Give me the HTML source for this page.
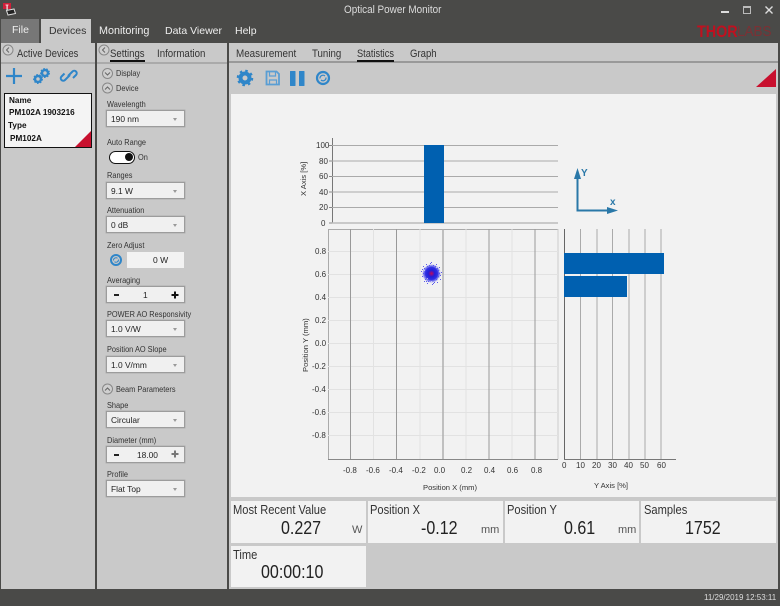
<!DOCTYPE html>
<html><head><meta charset="utf-8"><style>
html,body{margin:0;padding:0;width:780px;height:606px;overflow:hidden;background:#4a4a48}
body{position:relative;font-family:"Liberation Sans",sans-serif;color:#222}
.a,.t{position:absolute}
.t{white-space:nowrap;line-height:1;transform-origin:0 0}
.cb{position:absolute;left:106px;width:77px;height:15px;background:#f0f0f0;border:1px solid #9c9c9c;box-shadow:0 0 0 .5px #b0b0b0}
.cb span{position:absolute;left:4px;top:3px;font-size:8.400px;line-height:10px;color:#222;white-space:nowrap}
.cb i{position:absolute;right:7px;top:7px;width:0;height:0;border-left:2.5px solid transparent;border-right:2.5px solid transparent;border-top:3px solid #999}
.l{font-size:8.600px;color:#333;left:107px;transform:scaleX(.86)}
.c{position:absolute;background:#f2f2f2}
.c b{position:absolute;left:2px;top:2px;font-weight:400;font-size:12.5px;color:#333;line-height:14px;white-space:nowrap;transform:scaleX(.89);transform-origin:0 0}
.c u{position:absolute;text-decoration:none;font-size:18px;line-height:20px;color:#222;white-space:nowrap;transform:scaleX(.89);transform-origin:0 0}
.c s{position:absolute;text-decoration:none;font-size:11px;line-height:12px;color:#555;white-space:nowrap}
.m{font-size:10.500px;color:#eee}
.tab{font-size:11px;color:#333;transform:scaleX(.87)}
.tk{font-size:8px;color:#333;margin-top:.5px}
.ax{font-size:7.600px;color:#333}
.n{font-size:8.200px;font-weight:700;color:#111}
</style></head><body>

<!-- title bar text -->
<div class="t" style="left:344px;top:5px;font-size:11px;color:#ddd;transform:scaleX(.9)">Optical Power Monitor</div>
<svg class="a" style="left:0;top:0" width="24" height="18"><rect x="3" y="3" width="8" height="6" fill="#d0203a"/><rect x="5.500" y="4.500" width="3" height="1" fill="#f4c0c8"/><rect x="6.500" y="5" width="1.200" height="6" fill="#eee"/><path d="M6.500 10.500l7.500-1.500 1.500 4.500-7.500 1.500z" fill="#222" stroke="#ddd"/></svg>
<div class="a" style="left:721px;top:11px;width:8px;height:2px;background:#ddd"></div>
<div class="a" style="left:743px;top:6px;width:6px;height:5px;border:1px solid #bbb;border-top-width:2px"></div>
<svg class="a" style="left:764px;top:5px" width="11" height="11"><path d="M1.500 1.500l7 7M8.500 1.500l-7 7" stroke="#ddd" stroke-width="1.400" fill="none"/></svg>
<div class="t" style="left:697px;top:24px;font-size:16.500px;font-weight:700;color:#c0101f;transform:scaleX(.87)">THOR</div>
<div class="t" style="left:737px;top:25px;font-size:14.500px;color:#7d3034;transform:scaleX(.93)">LABS</div>

<!-- menu -->
<div class="a" style="left:1px;top:19px;width:38px;height:24px;background:#777"></div>
<div class="a" style="left:41px;top:19px;width:50px;height:24px;background:#c9c9c9"></div>
<div class="t m" style="left:12px;top:25px;color:#eee">File</div>
<div class="t m" style="left:49px;top:26px;color:#333">Devices</div>
<div class="t m" style="left:99px;top:26px;font-size:10.800px">Monitoring</div>
<div class="t m" style="left:165px;top:26px">Data Viewer</div>
<div class="t m" style="left:235px;top:26px">Help</div>

<!-- panels -->
<div class="a" style="left:1px;top:43px;width:94px;height:546px;background:#c9c9c9"></div>
<div class="a" style="left:97px;top:43px;width:130px;height:546px;background:#c9c9c9"></div>
<div class="a" style="left:229px;top:43px;width:549px;height:546px;background:#c9c9c9"></div>
<div class="a" style="left:1px;top:62px;width:94px;height:2px;background:#aaa"></div>
<div class="a" style="left:97px;top:62px;width:130px;height:2px;background:#aaa"></div>
<div class="a" style="left:229px;top:61px;width:549px;height:2px;background:#999"></div>

<!-- panel 1 -->
<svg class="a" style="left:0;top:42px" width="230" height="60" fill="none">
<circle cx="8" cy="8" r="5" stroke="#888" fill="#cfcfcf"/><path d="M9 5.500L6.500 8 9 10.500" stroke="#666"/>
<circle cx="104" cy="8" r="5" stroke="#888" fill="#cfcfcf"/><path d="M105 5.500L102.500 8 105 10.500" stroke="#666"/>
</svg>
<div class="t tab" style="left:17px;top:49px;transform:scaleX(.85)">Active Devices</div>
<svg class="a" style="left:0;top:64px" width="90" height="24" fill="none">
<path d="M6 12h16M14 4v16" stroke="#2f86c9" stroke-width="2.200"/>
<circle cx="38" cy="15" r="3" stroke="#2f86c9" stroke-width="2.500"/><circle cx="38" cy="15" r="4.200" stroke="#2f86c9" stroke-width="1.500" stroke-dasharray="1.500 1.500"/>
<circle cx="45" cy="9" r="3" stroke="#2f86c9" stroke-width="2.500"/><circle cx="45" cy="9" r="4.200" stroke="#2f86c9" stroke-width="1.500" stroke-dasharray="1.500 1.500"/>
<path d="M68 12l4.500-4.500a2.400 2.400 0 0 1 3.500 3.500l-3 3M70 11l-5 5a2.400 2.400 0 0 1-3.500-3.500l3-3" stroke="#2f86c9" stroke-width="2"/>
</svg>
<div class="a" style="left:4px;top:93px;width:86px;height:53px;background:#f4f4f4;border:1px solid #111"></div>
<svg class="a" style="left:74px;top:130px" width="18" height="18"><path d="M17 1V17H1z" fill="#c8102e"/></svg>
<div class="t n" style="left:9px;top:97px">Name</div>
<div class="t n" style="left:9px;top:109px">PM102A 1903216</div>
<div class="t n" style="left:8px;top:122px">Type</div>
<div class="t n" style="left:10px;top:135px">PM102A</div>

<!-- panel 2 -->
<div class="t tab" style="left:110px;top:49px">Settings</div>
<div class="a" style="left:110px;top:60px;width:35px;height:2px;background:#111"></div>
<div class="t tab" style="left:157px;top:49px;transform:scaleX(.88)">Information</div>
<svg class="a" style="left:98px;top:64px" width="20" height="335" fill="none" stroke-width="1">
<circle cx="9.500" cy="9.500" r="5" stroke="#888" fill="#cfcfcf"/><path d="M7 8.500L9.500 11 12 8.500" stroke="#666"/>
<circle cx="9.500" cy="24" r="5" stroke="#888" fill="#cfcfcf"/><path d="M7 25.500L9.500 23 12 25.500" stroke="#666"/>
<circle cx="9.500" cy="325" r="5" stroke="#888" fill="#cfcfcf"/><path d="M7 326.500L9.500 324 12 326.500" stroke="#666"/>
</svg>
<div class="t l" style="left:116px;top:69px">Display</div>
<div class="t l" style="left:116px;top:84px">Device</div>
<div class="t l" style="top:100px">Wavelength</div>
<div class="cb" style="top:110px"><span>190 nm</span><i></i></div>
<div class="t l" style="top:138px">Auto Range</div>
<div class="a" style="left:109px;top:151px;width:24px;height:11px;background:#fff;border:1px solid #111;border-radius:7px"></div>
<div class="a" style="left:125px;top:153px;width:8px;height:8px;background:#111;border-radius:50%"></div>
<div class="t l" style="left:138px;top:153px">On</div>
<div class="t l" style="top:171px">Ranges</div>
<div class="cb" style="top:182px"><span>9.1 W</span><i></i></div>
<div class="t l" style="top:206px">Attenuation</div>
<div class="cb" style="top:216px"><span>0 dB</span><i></i></div>
<div class="t l" style="top:241px">Zero Adjust</div>
<svg class="a" style="left:109px;top:253px" width="14" height="14" fill="none"><circle cx="7" cy="7" r="5" stroke="#2f86c9" stroke-width="2"/><path d="M4.500 7.500a2.500 2.500 0 0 1 4-2.200M9.500 6.500a2.500 2.500 0 0 1-4 2.200" stroke="#2f86c9"/></svg>
<div class="a" style="left:127px;top:252px;width:57px;height:16px;background:#f2f2f2"></div>
<div class="t" style="left:153px;top:256px;font-size:8.500px;color:#222">0 W</div>
<div class="t l" style="top:276px">Averaging</div>
<div class="cb" style="top:286px"><span style="left:36px">1</span></div>
<div class="a" style="left:114px;top:294px;width:5px;height:1.500px;background:#222"></div>
<svg class="a" style="left:170px;top:290px" width="10" height="10"><path d="M1.500 5h7M5 1.500v7" stroke="#111" stroke-width="2"/></svg>
<div class="t l" style="top:310px">POWER AO Responsivity</div>
<div class="cb" style="top:320px"><span>1.0 V/W</span><i></i></div>
<div class="t l" style="top:345px">Position AO Slope</div>
<div class="cb" style="top:356px"><span>1.0 V/mm</span><i></i></div>
<div class="t l" style="left:116px;top:385px">Beam Parameters</div>
<div class="t l" style="top:401px">Shape</div>
<div class="cb" style="top:411px"><span>Circular</span><i></i></div>
<div class="t l" style="top:436px">Diameter (mm)</div>
<div class="cb" style="top:446px"><span style="left:30px">18.00</span></div>
<div class="a" style="left:114px;top:454px;width:5px;height:1.500px;background:#222"></div>
<svg class="a" style="left:170px;top:449px" width="10" height="10"><path d="M1.500 5h7M5 1.500v7" stroke="#777" stroke-width="2"/></svg>
<div class="t l" style="top:470px">Profile</div>
<div class="cb" style="top:480px"><span>Flat Top</span><i></i></div>

<!-- panel 3 header -->
<div class="t tab" style="left:236px;top:49px;transform:scaleX(.895)">Measurement</div>
<div class="t tab" style="left:312px;top:49px;transform:scaleX(.88)">Tuning</div>
<div class="t tab" style="left:357px;top:49px;transform:scaleX(.84)">Statistics</div>
<div class="a" style="left:357px;top:60px;width:37px;height:2px;background:#111"></div>
<div class="t tab" style="left:410px;top:49px">Graph</div>
<svg class="a" style="left:230px;top:64px" width="110" height="28" fill="none">
<circle cx="15" cy="14" r="4.500" stroke="#2f86c9" stroke-width="4"/><circle cx="15" cy="14" r="7" stroke="#2f86c9" stroke-width="2.500" stroke-dasharray="2.500 3"/>
<path d="M36.500 7.500h10l2.500 2.500v10.500h-12.500z" stroke="#5a9ed4" stroke-width="1.800"/><path d="M39.500 8v4h6V8M39.500 20v-4h7v4" stroke="#5a9ed4" stroke-width="1.200"/>
<rect x="60" y="7" width="5.500" height="15" fill="#2f86c9" rx=".5"/><rect x="69" y="7" width="5.500" height="15" fill="#2f86c9" rx=".5"/>
<circle cx="93" cy="14" r="6" stroke="#2f86c9" stroke-width="2.200"/><path d="M90 14.500a3 3 0 0 1 5-2.500M96 13.500a3 3 0 0 1-5 2.500" stroke="#2f86c9" stroke-width="1.200"/>
</svg>
<svg class="a" style="left:755px;top:68px" width="22" height="20"><path d="M21 1V19H1z" fill="#c8102e"/></svg>

<!-- content -->
<div class="a" style="left:231px;top:94px;width:545px;height:403px;background:#f2f2f2"></div>

<svg class="a" style="left:231px;top:94px" width="545" height="403" fill="none">
<g transform="translate(-231 -94)">
<!-- top plot -->
<path d="M332.500 138V223" stroke="#777"/>
<path d="M332 145.500H558M332 161H558M332 176.500H558M332 192H558M332 207.500H558" stroke="#aaa" stroke-width="1"/>
<path d="M332 223H558" stroke="#bbb" stroke-width="1.500"/>
<path d="M329 145.500h3M329 161h3M329 176.500h3M329 192h3M329 207.500h3M329 223h3" stroke="#888"/>
<rect x="424" y="145" width="20" height="78" fill="#0060b0"/>
<!-- main plot -->
<path d="M328.500 459V229.500H558" stroke="#aaa"/>
<path d="M558 229V459" stroke="#ccc"/>
<path d="M328 251.500H558M328 274.500H558M328 297.500H558M328 320.500H558M328 343.500H558M328 366.500H558M328 389.500H558M328 412.500H558M328 435.500H558M373.500 229V459M420 229V459M466 229V459M512 229V459" stroke="#e2e2e2"/>
<path d="M350.500 229V459M396.500 229V459M489 229V459M535 229V459" stroke="#999"/>
<path d="M443 229V459" stroke="#b0b0b0" stroke-width="1.500"/>
<path d="M328 459.500H558" stroke="#888"/>
<!-- spot -->
<defs><radialGradient id="s"><stop offset="0" stop-color="#c01050"/><stop offset=".18" stop-color="#7010a0"/><stop offset=".35" stop-color="#2020d8"/><stop offset=".65" stop-color="#3030e4"/><stop offset=".85" stop-color="#6868ee" stop-opacity=".7"/><stop offset="1" stop-color="#8080f4" stop-opacity="0"/></radialGradient></defs>
<circle cx="431.500" cy="273.500" r="9.500" fill="url(#s)"/>
<path fill="#5c5cec" d="M421 271h1v1h-1zM422 276h1v1h-1zM423 266h1v1h-1zM424 281h1v1h-1zM426 264h1v1h-1zM427 283h1v1h-1zM431 262h1v1h-1zM432 284h1v1h-1zM436 264h1v1h-1zM437 282h1v1h-1zM439 267h1v1h-1zM440 279h1v1h-1zM441 272h1v1h-1zM440 275h1v1h-1zM422 269h1v1h-1zM429 265h1v1h-1zM434 282h1v1h-1zM425 279h1v1h-1zM438 270h1v1h-1zM435 266h1v1h-1zM423 273h1v1h-1zM424 268h1v1h-1zM425 276h1v1h-1zM427 266h1v1h-1zM428 281h1v1h-1zM431 280h1v1h-1zM433 265h1v1h-1zM436 279h1v1h-1zM438 276h1v1h-1zM439 273h1v1h-1zM437 268h1v1h-1zM430 263h1v1h-1zM433 283h1v1h-1zM426 281h1v1h-1z"/>
<path fill="#f2f2f2" fill-opacity=".6" d="M424 270h1v1h-1zM427 278h1v1h-1zM436 267h1v1h-1zM438 278h1v1h-1zM425 266h1v1h-1zM431 281h1v1h-1zM439 271h1v1h-1z"/>
<!-- right plot -->
<path d="M580.500 229V459M597 229V459M612.500 229V459M629 229V459M645 229V459M661 229V459" stroke="#aaa"/>
<path d="M564.500 229V459" stroke="#666"/>
<path d="M564 459.500H676" stroke="#777"/>
<rect x="564" y="253" width="100" height="21" fill="#0060b0"/>
<rect x="564" y="276" width="63" height="21" fill="#0060b0"/>
<!-- axes icon -->
<path d="M577.500 178V210.500H608" stroke="#2a78a8" stroke-width="2"/>
<path d="M577.500 168l-3.500 11h7z" fill="#2a78a8"/>
<path d="M618 210.500l-11-3.500v7z" fill="#2a78a8"/>
</g>
</svg>
<div class="t" style="left:581px;top:169px;font-size:10px;font-weight:700;color:#2a78a8">Y</div>
<div class="t" style="left:610px;top:198px;font-size:10px;font-weight:700;color:#2a78a8">x</div>

<!-- tick labels -->
<div class="t tk" style="left:316px;top:141px">100</div>
<div class="t tk" style="left:319px;top:157px">80</div>
<div class="t tk" style="left:319px;top:172px">60</div>
<div class="t tk" style="left:319px;top:188px">40</div>
<div class="t tk" style="left:319px;top:203px">20</div>
<div class="t tk" style="left:321px;top:219px">0</div>
<div class="t ax" style="left:300px;top:196px;transform:rotate(-90deg)">X Axis [%]</div>

<div class="t tk" style="left:315px;top:247px">0.8</div>
<div class="t tk" style="left:315px;top:270px">0.6</div>
<div class="t tk" style="left:315px;top:293px">0.4</div>
<div class="t tk" style="left:315px;top:316px">0.2</div>
<div class="t tk" style="left:315px;top:339px">0.0</div>
<div class="t tk" style="left:312px;top:362px">-0.2</div>
<div class="t tk" style="left:312px;top:385px">-0.4</div>
<div class="t tk" style="left:312px;top:408px">-0.6</div>
<div class="t tk" style="left:312px;top:431px">-0.8</div>
<div class="t ax" style="left:302px;top:372px;transform:rotate(-90deg)">Position Y (mm)</div>

<div class="t tk" style="left:343px;top:466px">-0.8</div>
<div class="t tk" style="left:366px;top:466px">-0.6</div>
<div class="t tk" style="left:389px;top:466px">-0.4</div>
<div class="t tk" style="left:412px;top:466px">-0.2</div>
<div class="t tk" style="left:434px;top:466px">0.0</div>
<div class="t tk" style="left:461px;top:466px">0.2</div>
<div class="t tk" style="left:484px;top:466px">0.4</div>
<div class="t tk" style="left:507px;top:466px">0.6</div>
<div class="t tk" style="left:531px;top:466px">0.8</div>
<div class="t ax" style="left:423px;top:484px">Position X (mm)</div>

<div class="t tk" style="left:562px;top:461px">0</div>
<div class="t tk" style="left:576px;top:461px">10</div>
<div class="t tk" style="left:592px;top:461px">20</div>
<div class="t tk" style="left:608px;top:461px">30</div>
<div class="t tk" style="left:624px;top:461px">40</div>
<div class="t tk" style="left:640px;top:461px">50</div>
<div class="t tk" style="left:657px;top:461px">60</div>
<div class="t ax" style="left:594px;top:482px">Y Axis [%]</div>

<!-- cells -->
<div class="c" style="left:231px;top:501px;width:135px;height:42px"><b>Most Recent Value</b><u style="left:50px;top:17px">0.227</u><s style="left:121px;top:23px">W</s></div>
<div class="c" style="left:368px;top:501px;width:135px;height:42px"><b>Position X</b><u style="left:53px;top:17px">-0.12</u><s style="left:113px;top:23px">mm</s></div>
<div class="c" style="left:505px;top:501px;width:134px;height:42px"><b>Position Y</b><u style="left:59px;top:17px">0.61</u><s style="left:113px;top:23px">mm</s></div>
<div class="c" style="left:641px;top:501px;width:135px;height:42px"><b style="left:3px">Samples</b><u style="left:44px;top:17px">1752</u></div>
<div class="c" style="left:231px;top:546px;width:135px;height:41px"><b>Time</b><u style="left:30px;top:16px">00:00:10</u></div>

<!-- status -->
<div class="t" style="left:704px;top:594px;font-size:8px;color:#ddd">11/29/2019 12:53:11</div>
</body></html>
